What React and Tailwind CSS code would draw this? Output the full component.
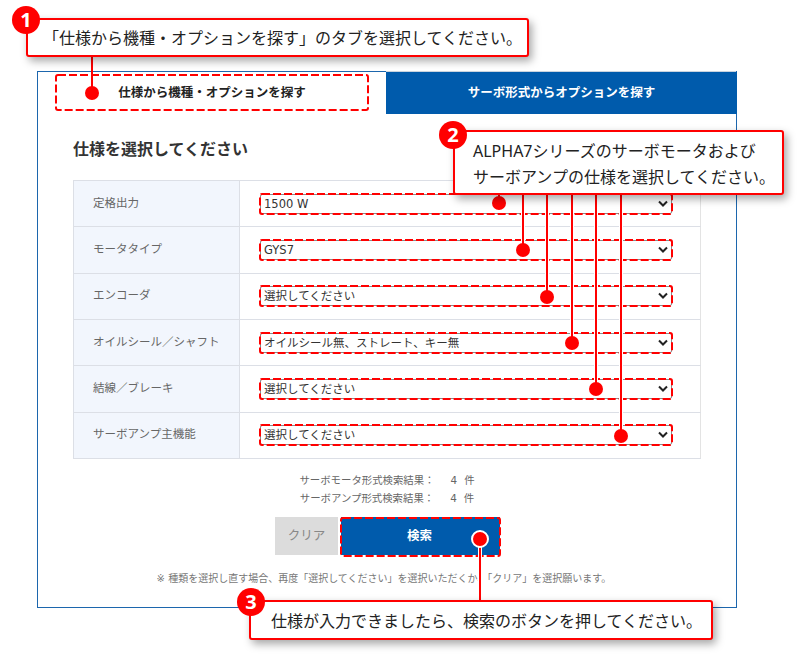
import React from "react";

const FONT = "font-['DejaVu_Sans','Noto_Sans_CJK_JP',sans-serif]";
const CALLOUT = "font-['Noto_Sans','Noto_Sans_CJK_JP',sans-serif]";

const rows = [
  { label: "定格出力", value: "1500 W" },
  { label: "モータタイプ", value: "GYS7" },
  { label: "エンコーダ", value: "選択してください" },
  { label: "オイルシール\uFF0Fシャフト", value: "オイルシール無、ストレート、キー無" },
  { label: "結線\uFF0Fブレーキ", value: "選択してください" },
  { label: "サーボアンプ主機能", value: "選択してください" },
];

const results = ["サーボモータ形式検索結果\uFF1A", "サーボアンプ形式検索結果\uFF1A"];

const pins = [
  { line: "left-[498px] top-[194px] h-[9px]", dot: "left-[492px] top-[196px]" },
  { line: "left-[522px] top-[194px] h-[56px]", dot: "left-[516px] top-[243px]" },
  { line: "left-[546px] top-[194px] h-[103px]", dot: "left-[540px] top-[290px]" },
  { line: "left-[571px] top-[194px] h-[149px]", dot: "left-[565px] top-[336px]" },
  { line: "left-[595px] top-[194px] h-[195px]", dot: "left-[589px] top-[382px]" },
  { line: "left-[620px] top-[194px] h-[242px]", dot: "left-[614px] top-[429px]" },
];

function Dashed({ w, h, className }) {
  return (
    <svg className={`absolute pointer-events-none ${className}`} width={w} height={h} viewBox={`0 0 ${w} ${h}`} fill="none">
      <rect x="1" y="1" width={w - 2} height={h - 2} rx="2" stroke="#f00" strokeWidth="2" strokeDasharray="8 3" />
    </svg>
  );
}

function SelectBox({ value }) {
  return (
    <div className="relative w-[412px] h-[20px]">
      <select
        defaultValue={value}
        className="block appearance-none w-full h-full bg-white border border-[#8a8a8a] rounded-[2px] pl-[3px] pr-5 text-[11.5px] leading-[18px] text-[#333] outline-none"
      >
        <option>{value}</option>
      </select>
      <svg className="absolute right-[4px] top-[6px] pointer-events-none" width="10" height="8" viewBox="0 0 10 8" fill="none">
        <path d="M1 1.5 L5 5.5 L9 1.5" stroke="#222" strokeWidth="2" />
      </svg>
      <Dashed w={414} h={22} className="-left-px -top-px" />
    </div>
  );
}

function Badge({ n, pos }) {
  return (
    <div className={`absolute ${pos} w-[28px] h-[28px] rounded-full bg-[#f00] text-white flex items-center justify-center text-[20px] font-bold leading-none ${CALLOUT}`}>
      {n}
    </div>
  );
}

export default function App() {
  return (
    <div className={`relative w-[800px] h-[660px] bg-white overflow-hidden ${FONT}`}>
      <div className="pt-[71px] pl-[37px]">
        <div className="w-[700px] h-[537px] border-l border-b border-r border-[#1c66ad] flex flex-col">
          <div className="flex h-[43px]">
            <div className="w-[348px] border-t border-[#1c66ad] flex items-center justify-center text-[12.5px] font-bold text-[#222] bg-white">
              仕様から機種・オプションを探す
            </div>
            <div className="flex-1 flex flex-col">
              <div className="h-[1px] bg-[#c9d3de]" />
              <div className="flex-1 bg-[#005bac] flex items-center justify-center text-[12.5px] font-bold text-white -mr-px">
                サーボ形式からオプションを探す
              </div>
            </div>
          </div>

          <div className="px-[35px] flex flex-col">
            <h2 className="h-[66px] flex items-center text-[16px] font-bold text-[#333] pt-[6px]">仕様を選択してください</h2>

            <div className="w-[628px] border-t border-l border-[#dcdfe6]">
              {rows.map((r) => (
                <div key={r.label} className="flex h-[46.33px] border-b border-[#dcdfe6]">
                  <div className="w-[166px] shrink-0 bg-[#f2f6fd] border-r border-[#dcdfe6] pl-[19px] flex items-center text-[11.5px] text-[#666] pb-[1px]">
                    {r.label}
                  </div>
                  <div className="flex-1 border-r border-[#e3e3e3] pl-[20px] flex items-center">
                    <SelectBox value={r.value} />
                  </div>
                </div>
              ))}
            </div>

            <div className="mt-[12px] flex flex-col items-center text-[10.4px] leading-[18px] text-[#666]">
              {results.map((t) => (
                <div key={t} className="flex">
                  <span>{t}</span>
                  <span className="ml-[16px]">4</span>
                  <span className="ml-[7px]">件</span>
                </div>
              ))}
            </div>

            <div className="mt-[10px] ml-[202px] flex gap-[3px] h-[38px]">
              <button className="w-[63px] bg-[#dcdcdc] text-[#888] text-[12.5px]">クリア</button>
              <button className="w-[159px] bg-[#005bac] text-white text-[12.5px] font-bold pr-[2px]">検索</button>
            </div>

            <p className="mt-[16px] pr-[6px] text-center text-[10px] leading-[16px] text-[#777] whitespace-nowrap">
              ※ 種類を選択し直す場合、再度「選択してください」を選択いただくか、「クリア」を選択願います。
            </p>
          </div>
        </div>
      </div>

      {/* highlights on the tab and the search button */}
      <Dashed w={314} h={37} className="left-[55px] top-[74px]" />
      <Dashed w={161} h={40} className="left-[340px] top-[517px]" />

      {/* pin for step 1 */}
      <div className="absolute left-[91px] top-[56px] w-[2px] h-[37px] bg-[#f00]" />
      <div className="absolute left-[85px] top-[86px] w-[14px] h-[14px] rounded-full bg-[#f00]" />

      {/* pins for step 2 */}
      {pins.map((p) => (
        <React.Fragment key={p.line}>
          <div className={`absolute ${p.line} w-[4px] -ml-px bg-white`} />
          <div className={`absolute ${p.line} w-[2px] bg-[#f00]`} />
          <div className={`absolute ${p.dot} w-[14px] h-[14px] rounded-full bg-[#f00]`} />
        </React.Fragment>
      ))}

      {/* pin for step 3 */}
      <div className="absolute left-[478px] top-[539px] w-[4px] h-[62px] bg-white" />
      <div className="absolute left-[479px] top-[539px] w-[2px] h-[62px] bg-[#f00]" />
      <div className="absolute left-[471px] top-[530px] w-[18px] h-[18px] rounded-full bg-[#f00] border-2 border-white" />

      {/* callouts */}
      <div className={`absolute left-[26px] top-[18px] w-[503px] h-[39px] bg-white border-2 border-[#f00] rounded-[3px] shadow-[3px_4px_8px_rgba(0,0,0,0.35)] pl-[15px] pt-[3px] text-[16px] leading-[30px] text-[#222] whitespace-nowrap ${CALLOUT}`}>
        「仕様から機種・オプションを探す」のタブを選択してください。
      </div>
      <Badge n="1" pos="left-[12px] top-[6px]" />

      <div className={`absolute left-[453px] top-[130px] w-[331px] h-[65px] bg-white border-2 border-[#f00] rounded-[3px] shadow-[3px_4px_8px_rgba(0,0,0,0.35)] pl-[18px] pt-[6px] text-[16px] leading-[26px] text-[#222] whitespace-nowrap ${CALLOUT}`}>
        <div>ALPHA7シリーズのサーボモータおよび</div>
        <div>サーボアンプの仕様を選択してください。</div>
      </div>
      <Badge n="2" pos="left-[439px] top-[121px]" />

      <div className={`absolute left-[249px] top-[600px] w-[464px] h-[40px] bg-white border-2 border-[#f00] rounded-[3px] shadow-[3px_4px_8px_rgba(0,0,0,0.35)] pl-[20px] pt-[3px] text-[16px] leading-[32px] text-[#222] whitespace-nowrap ${CALLOUT}`}>
        仕様が入力できましたら、検索のボタンを押してください。
      </div>
      <Badge n="3" pos="left-[237px] top-[588px]" />
    </div>
  );
}
